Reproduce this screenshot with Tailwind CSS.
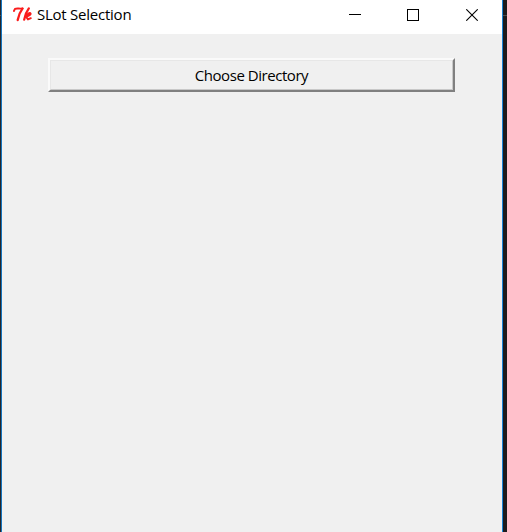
<!DOCTYPE html>
<html lang="en">
<head>
<meta charset="utf-8">
<title>SLot Selection</title>
<script src="https://cdn.jsdelivr.net/npm/@tailwindcss/browser@4"></script>
</head>
<body class="h-screen overflow-hidden bg-[#1c1b1d] font-['Open_Sans','Noto_Sans',sans-serif] text-black">
<div class="flex h-full">
  <div class="w-px shrink-0 bg-[#24262c] pt-[15px]"><div class="h-px bg-[#4b4b4d]"></div></div>
  <main class="flex w-[502px] shrink-0 flex-col border-x border-l-[#1474bd] border-r-[#1683d8] bg-[#f0f0f0]">
    <header class="flex h-[34px] shrink-0 items-start bg-white pl-[11px]">
      <svg class="mt-[7px] h-[15px] w-[20px] shrink-0" viewBox="0 0 20 15" fill="none" stroke="#fa1c1c" stroke-linecap="round" stroke-linejoin="round">
        <path d="M.9 4 2 1.9C4 .9 6.5 2 9.6 1.4" stroke-width="1.9"/>
        <path d="M9.5 1.6C7.2 4.5 5.6 8 4.7 13" stroke-width="2.3"/>
        <path d="M15.8 1.4C14 3.8 12 8.5 11.2 12.6" stroke-width="2.3"/>
        <path d="M12.4 9.6C13.8 7 17 5.2 17.6 6.6 17.8 8 15 9 13 9.4L15 12.4 17.8 11.2" stroke-width="2"/>
      </svg>
      <h1 class="ml-[4px] mt-[4px] w-[98px] whitespace-nowrap text-[15px] leading-5 tracking-[-0.24px]">SLot Selection</h1>
      <div class="ml-auto flex pr-[1px]">
        <button class="flex h-[30px] w-[58px] items-center justify-center" aria-label="Minimize">
          <svg class="mr-[2px] h-3 w-3" viewBox="0 0 12 12" shape-rendering="crispEdges"><path d="M0 5.5H12" stroke="#000"/></svg>
        </button>
        <button class="flex h-[30px] w-[58px] items-center justify-center" aria-label="Maximize">
          <svg class="mr-[2px] h-3 w-3" viewBox="0 0 12 12" fill="none" shape-rendering="crispEdges"><path d="M.5.5H11.5V11.5H.5Z" stroke="#000"/></svg>
        </button>
        <button class="flex h-[30px] w-[58px] items-center justify-center" aria-label="Close">
          <svg class="h-3 w-3" viewBox="0 0 12 12" fill="none"><path d="M.3.3 11.7 11.7M11.7.3.3 11.7" stroke="#000" stroke-width="1.1"/></svg>
        </button>
      </div>
    </header>
    <section class="px-[46px] pt-[24px]">
      <button class="flex h-[34px] w-[407px] border-2 border-t-[#fafafa] border-l-[#fafafa] border-r-[#808080] border-b-[#808080] bg-[#f0f0f0]">
        <span class="flex h-full w-full justify-center whitespace-nowrap border border-t-[#e7e7e7] border-l-[#e7e7e7] border-r-[#c8c8c8] border-b-[#c8c8c8] pt-[4px] text-[15px] leading-5 tracking-[-0.45px]">Choose Directory</span>
      </button>
    </section>
  </main>
  <div class="w-[4px] shrink-0 pt-[15px]"><div class="h-px bg-[#4b4b4d]"></div></div>
</div>
</body>
</html>
